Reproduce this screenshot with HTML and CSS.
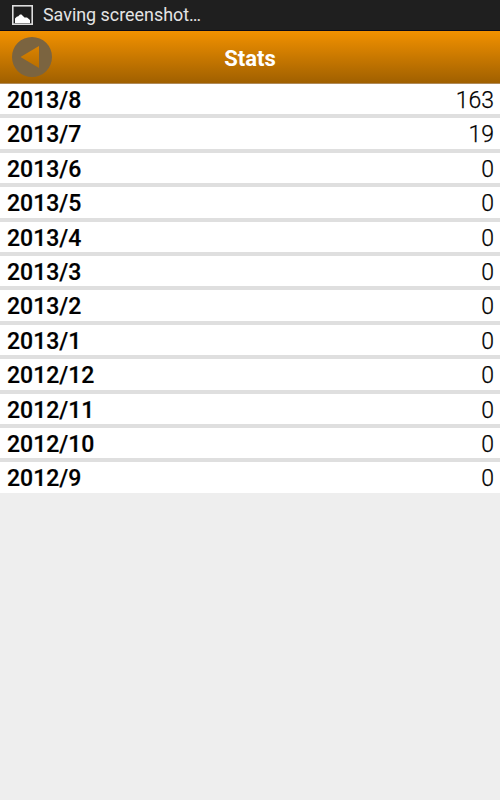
FILE: index.html
```html
<!DOCTYPE html>
<html lang="en">
 <head>
  <meta charset="utf-8">
  <title>Stats</title>
  <link rel="stylesheet" href="styles.css">
 </head>
 <body>
  <div class="status-bar">
   <svg class="picture" width="21" height="20" viewBox="0 0 21 20">
    <rect x="0.8" y="0.8" width="19.4" height="18.4" fill="none" stroke="#ddd" stroke-width="1.6" />
    <path d="M3 18V13.500L5 11.500H6L8 9.500L9.500 9.500L12.500 12.500H15L18 15V18Z" fill="#fff" />
   </svg>
   <span>Saving screenshot…</span>
  </div>
  <header class="title-bar">
   <svg class="back" width="40" height="40" viewBox="0 0 40 40">
    <path d="M20 0a20 20 0 1 0 0 40a20 20 0 1 0 0-40ZM8.500 20L27 9V31Z" fill="#7b6440" fill-rule="evenodd" />
   </svg>
   <h1>Stats</h1>
  </header>
  <ul class="stats">
   <li><b>2013/8</b><span>163</span></li>
   <li><b>2013/7</b><span>19</span></li>
   <li><b>2013/6</b><span>0</span></li>
   <li><b>2013/5</b><span>0</span></li>
   <li><b>2013/4</b><span>0</span></li>
   <li><b>2013/3</b><span>0</span></li>
   <li><b>2013/2</b><span>0</span></li>
   <li><b>2013/1</b><span>0</span></li>
   <li><b>2012/12</b><span>0</span></li>
   <li><b>2012/11</b><span>0</span></li>
   <li><b>2012/10</b><span>0</span></li>
   <li><b>2012/9</b><span>0</span></li>
  </ul>
 </body>
</html>
```
FILE: styles.css
```css
body {
    margin: 0;
    background: #EEE;
    font-family: Roboto, sans-serif;
}

.status-bar {
    display: flex;
    box-sizing: border-box;
    align-items: center;
    gap: 10px;
    height: 31px;
    padding: 0 0 1px 12px;
    border-bottom: 1px solid #0A0A18;
    background: #1F1F1F;
    color: #E4E4E4;
    font-size: 17.9px;
    line-height: 29px;
}

.title-bar {
    display: grid;
    box-sizing: border-box;
    grid-template-columns: 40px 1fr 40px;
    align-items: center;
    height: 53px;
    padding: 0 12px 1px;
    border-bottom: 1px solid #B08A58;
    background: linear-gradient(#F29100, #A06000);
}

.title-bar h1 {
    margin: 4px 0 0;
    color: white;
    font-size: 22px;
    text-align: center;
}

.stats {
    margin: 0;
    padding: 0;
    list-style: none;
}

.stats li {
    display: flex;
    justify-content: space-between;
    height: 30.4px;
    padding: 0 6px 0 7px;
    border-bottom: 4px solid #DFDFDF;
    background: white;
    color: black;
    font-size: 23px;
    line-height: 34px;
}

.stats li:last-child {
    border-bottom: 0;
}

.stats b {
    font-weight: 500;
    -webkit-text-stroke: 0.2px black;
}

.stats span {
    font-weight: 300;
    -webkit-text-stroke: 0.25px black;
}
```
